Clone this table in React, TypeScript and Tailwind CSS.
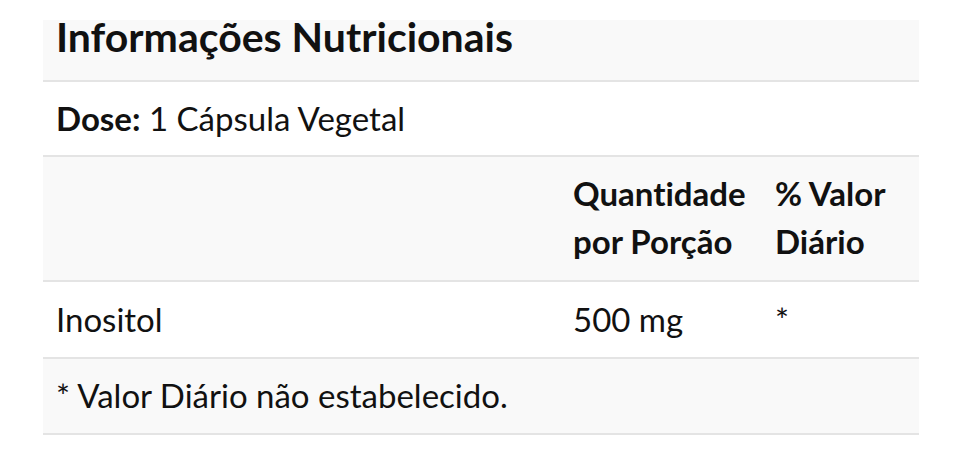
export default function App() {
  return (
    <div className="bg-white w-[963px] h-[457px] pt-[20px] pl-[43px] font-['Lato',sans-serif] text-[#111] [font-variant-ligatures:none]">
      <div className="w-[876px]">
        <div className="bg-[#f9f9f9] h-[62px] px-[13px] flex items-start border-b-2 border-[#e4e4e4]">
          <h2 className="text-[41px] font-bold leading-[33px]">Informações Nutricionais</h2>
        </div>
        <div className="h-[75px] px-[13px] flex items-center border-b-2 border-[#e4e4e4] text-[33px]">
          <span className="font-bold">Dose:</span>&nbsp;1 Cápsula Vegetal
        </div>
        <div className="bg-[#f9f9f9] grid grid-cols-[517px_202px_157px] h-[125px] border-b-2 border-[#e4e4e4] text-[33px] font-bold leading-[48px] items-center">
          <div />
          <div className="px-[13px] -mt-[4px]">Quantidade<br />por Porção</div>
          <div className="px-[13px] -mt-[4px]">% Valor<br />Diário</div>
        </div>
        <div className="grid grid-cols-[517px_202px_157px] h-[77px] border-b-2 border-[#e4e4e4] text-[33px] items-center">
          <div className="px-[13px]">Inositol</div>
          <div className="px-[13px]">500 mg</div>
          <div className="px-[13px]">*</div>
        </div>
        <div className="bg-[#f9f9f9] h-[76px] px-[13px] flex items-center border-b-2 border-[#e4e4e4] text-[33px]">
          * Valor Diário não estabelecido.
        </div>
      </div>
    </div>
  );
}
